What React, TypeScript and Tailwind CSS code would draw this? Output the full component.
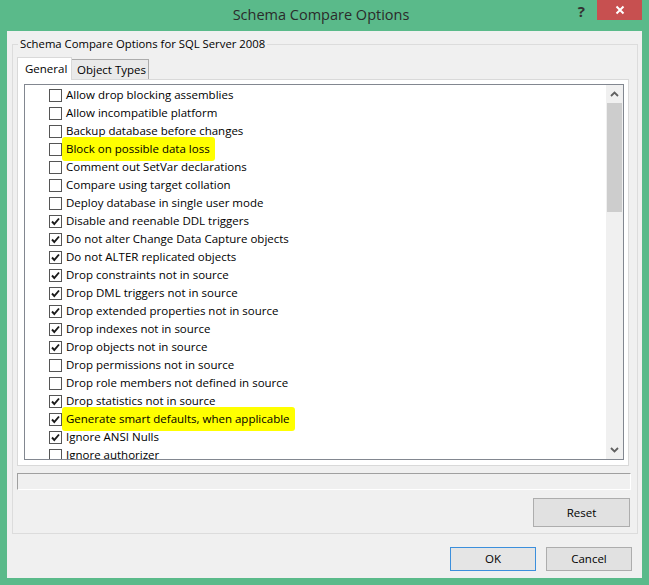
import { ReactNode } from 'react'

type Option = { label: string; checked: boolean; mark?: boolean }

const options: Option[] = [
  { label: 'Allow drop blocking assemblies', checked: false },
  { label: 'Allow incompatible platform', checked: false },
  { label: 'Backup database before changes', checked: false },
  { label: 'Block on possible data loss', checked: false, mark: true },
  { label: 'Comment out SetVar declarations', checked: false },
  { label: 'Compare using target collation', checked: false },
  { label: 'Deploy database in single user mode', checked: false },
  { label: 'Disable and reenable DDL triggers', checked: true },
  { label: 'Do not alter Change Data Capture objects', checked: true },
  { label: 'Do not ALTER replicated objects', checked: true },
  { label: 'Drop constraints not in source', checked: true },
  { label: 'Drop DML triggers not in source', checked: true },
  { label: 'Drop extended properties not in source', checked: true },
  { label: 'Drop indexes not in source', checked: true },
  { label: 'Drop objects not in source', checked: true },
  { label: 'Drop permissions not in source', checked: false },
  { label: 'Drop role members not defined in source', checked: false },
  { label: 'Drop statistics not in source', checked: true },
  { label: 'Generate smart defaults, when applicable', checked: true, mark: true },
  { label: 'Ignore ANSI Nulls', checked: true },
  { label: 'Ignore authorizer', checked: false },
]

function CheckBox({ checked }: { checked: boolean }) {
  return (
    <span className="w-[13px] h-[13px] border border-[#555] bg-white flex-shrink-0 flex items-center justify-center">
      {checked && (
        <svg width="11" height="11" viewBox="0 0 11 11">
          <path d="M2 5.5 L4.3 8 L9 2.5" fill="none" stroke="#1a1a1a" strokeWidth={1.9} />
        </svg>
      )}
    </span>
  )
}

function Button({ children, primary }: { children: ReactNode; primary?: boolean }) {
  return (
    <button
      className={
        primary
          ? 'w-[86px] h-[24px] border border-[#3c8fdc] bg-[#e5e5e5] text-[11.5px] text-black'
          : 'w-[86px] h-[24px] border border-[#adadad] bg-[#e1e1e1] text-[11.5px] text-black'
      }
    >
      {children}
    </button>
  )
}

export default function App() {
  return (
    <div
      className="w-[649px] h-[585px] bg-[#5aba8a] flex flex-col text-black"
      style={{ fontFamily: '"Open Sans", "Noto Sans", sans-serif' }}
    >
      {/* title bar */}
      <div className="h-[31px] flex-shrink-0 grid grid-cols-[1fr_auto_1fr] pr-[7px]">
        <div />
        <div className="text-[14.5px] text-[#2b2b2b] leading-none pt-[8px]">Schema Compare Options</div>
        <div className="flex justify-end items-start">
          <span className="text-[15px] font-bold text-[#333] leading-none mt-[4px] mr-[12px]">?</span>
          <div className="w-[45px] h-[20px] bg-[#c75050] flex items-center justify-center">
            <svg width="10" height="10" viewBox="0 0 10 10">
              <path d="M1.5 1.5 L8.5 8.5 M8.5 1.5 L1.5 8.5" stroke="white" strokeWidth={2} />
            </svg>
          </div>
        </div>
      </div>

      {/* client area */}
      <div className="mx-[7px] mb-[7px] flex-1 bg-[#f0f0f0] flex flex-col">
        <fieldset className="ml-[5px] mt-[5px] w-[626px] border border-[#dcdcdc] pl-[4px] pb-[6px]">
          <legend className="ml-[1px] px-[2px] text-[11.3px] leading-[16px]">
            Schema Compare Options for SQL Server 2008
          </legend>

          {/* tabs */}
          <div className="mt-[5px] h-[22px] flex items-end">
            <div className="relative z-10 -mb-px h-[23px] w-[55px] bg-white border border-b-0 border-[#d9d9d9] text-[11.5px] pl-[7px] pt-[2px]">
              General
            </div>
            <div className="h-[20px] w-[77px] bg-[#eaeaea] border border-l-0 border-b-0 border-[#acacac] text-[11.5px] pl-[5px] pt-[1px]">
              Object Types
            </div>
          </div>

          <div className="w-[612px] h-[387px] bg-white border border-[#d9d9d9] pl-[6px] pt-[4px] pr-[4px] pb-[5px]">
            <div className="h-[376px] border border-[#828790] bg-white flex">
              <div className="flex-1 overflow-hidden pt-px">
                {options.map((o) => (
                  <div key={o.label} className="h-[18px] flex items-center pl-[24px] gap-[4px]">
                    <CheckBox checked={o.checked} />
                    {o.mark ? (
                      <span className="text-[11.5px] whitespace-nowrap bg-[#ffff00] -ml-[4px] pl-[4px] pr-[5px] py-[3px] rounded-[3px]">
                        {o.label}
                      </span>
                    ) : (
                      <span className="text-[11.5px] whitespace-nowrap">{o.label}</span>
                    )}
                  </div>
                ))}
              </div>
              {/* scrollbar */}
              <div className="w-[17px] bg-[#f0f0f0] flex flex-col">
                <div className="h-[18px] flex items-center justify-center">
                  <svg width="9" height="6" viewBox="0 0 9 6">
                    <path d="M1 5 L4.5 1.5 L8 5" fill="none" stroke="#606060" strokeWidth={1.8} />
                  </svg>
                </div>
                <div className="mx-[1px] h-[109px] bg-[#cdcdcd]" />
                <div className="flex-1" />
                <div className="h-[18px] flex items-center justify-center">
                  <svg width="9" height="6" viewBox="0 0 9 6">
                    <path d="M1 1 L4.5 4.5 L8 1" fill="none" stroke="#606060" strokeWidth={1.8} />
                  </svg>
                </div>
              </div>
            </div>
          </div>

          <div className="mt-[7px] w-[614px] h-[17px] border border-[#a0a0a0] border-r-white border-b-white bg-[#f0f0f0]" />

          <div className="mt-[8px] flex justify-end pr-[7px]">
            <button className="w-[97px] h-[29px] border border-[#adadad] bg-[#e1e1e1] text-[11.5px]">Reset</button>
          </div>
        </fieldset>

        <div className="mt-[13px] flex justify-end gap-[10px] pr-[10px]">
          <Button primary>OK</Button>
          <Button>Cancel</Button>
        </div>
      </div>
    </div>
  )
}
